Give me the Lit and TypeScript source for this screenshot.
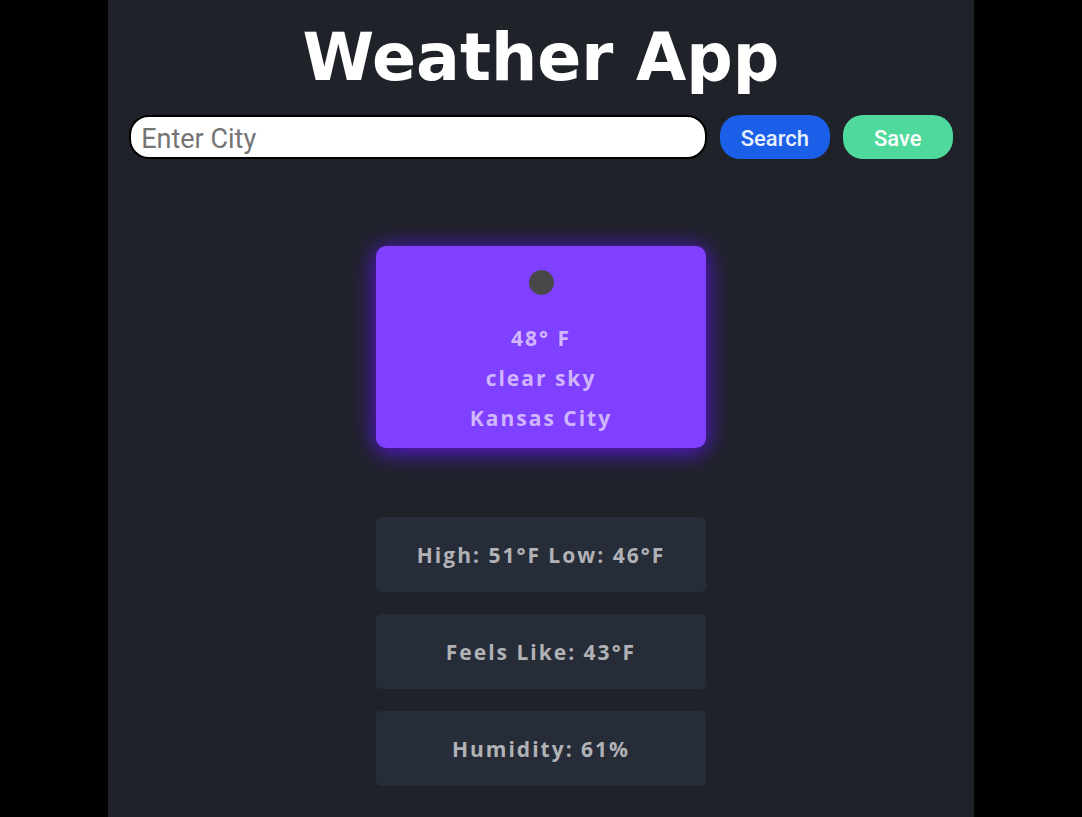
import { LitElement, html, css } from "lit";
import { customElement, state } from "lit/decorators.js";

@customElement("app-root")
export class AppRoot extends LitElement {
  @state() private city = "";

  @state() private weather = {
    temp: 48,
    description: "clear sky",
    name: "Kansas City",
    high: 51,
    low: 46,
    feelsLike: 43,
    humidity: 61,
  };

  static styles = css`
    :host {
      display: block;
      min-height: 100vh;
      background: #000;
      font-family: "Open Sans", "Noto Sans", sans-serif;
    }
    * {
      box-sizing: border-box;
    }
    .page {
      width: 80%;
      min-height: 100vh;
      margin: 0 auto;
      padding: 22px 21px 31px;
      background: #1f2229;
    }
    .title {
      margin: 0;
      color: #fff;
      font-family: "DejaVu Sans", sans-serif;
      font-size: 65px;
      font-weight: 700;
      line-height: 72px;
      text-align: center;
    }
    .search {
      display: flex;
      gap: 13px;
      margin-top: 21px;
    }
    .city {
      flex: 1;
      min-width: 0;
      height: 44px;
      padding: 3px 10px 0;
      border: 2px solid #000;
      border-radius: 20px;
      background: #fff;
      color: #222;
      font: 400 27px Roboto, sans-serif;
    }
    .city::placeholder {
      color: #757575;
      opacity: 1;
    }
    .button {
      width: 110px;
      height: 44px;
      padding: 3px 0 0;
      border: 0;
      border-radius: 20px;
      background: #1b5fe8;
      color: #e8effd;
      font: 500 22px Roboto, sans-serif;
      cursor: pointer;
    }
    .save {
      background: #4fd99c;
      color: #fff;
    }
    .results {
      display: flex;
      flex-direction: column;
      align-items: center;
      gap: 22px;
      margin-top: 87px;
      font-size: 21px;
      font-weight: 700;
      letter-spacing: 2px;
      text-align: center;
    }
    .card,
    .detail {
      width: 330px;
      max-width: 100%;
    }
    .card {
      margin-bottom: 47px;
      padding: 24px 10px 10px;
      border-radius: 10px;
      background: #7f40ff;
      color: #d0b5ff;
      box-shadow: 0 3px 24px 1px #5b16e0;
    }
    .icon {
      display: block;
      width: 25px;
      height: 25px;
      margin: 0 auto 23px;
    }
    .line {
      margin: 0;
      line-height: 40px;
    }
    .detail {
      margin: 0;
      padding: 18px 10px 17px;
      border-radius: 5px;
      background: #272d38;
      color: #b1b2b6;
      line-height: 40px;
    }
  `;

  private onInput(event: Event) {
    this.city = (event.target as HTMLInputElement).value;
  }

  private onSubmit(event: Event) {
    event.preventDefault();
    const name = this.city.trim();
    if (name) this.weather = { ...this.weather, name };
  }

  render() {
    const w = this.weather;
    const details = [
      `High: ${w.high}°F Low: ${w.low}°F`,
      `Feels Like: ${w.feelsLike}°F`,
      `Humidity: ${w.humidity}%`,
    ];
    return html`
      <main class="page">
        <h1 class="title">Weather App</h1>
        <form class="search" @submit=${this.onSubmit}>
          <input
            class="city"
            type="text"
            aria-label="Enter City"
            placeholder="Enter City"
            .value=${this.city}
            @input=${this.onInput}
          />
          <button class="button" type="submit">Search</button>
          <button class="button save" type="button">Save</button>
        </form>
        <section class="results">
          <div class="card">
            <svg class="icon" viewBox="0 0 25 25" aria-hidden="true">
              <circle cx="12.5" cy="12.5" r="12.5" fill="#48484a" />
            </svg>
            <p class="line">${w.temp}° F</p>
            <p class="line">${w.description}</p>
            <p class="line">${w.name}</p>
          </div>
          ${details.map((text) => html`<p class="detail">${text}</p>`)}
        </section>
      </main>
    `;
  }
}
